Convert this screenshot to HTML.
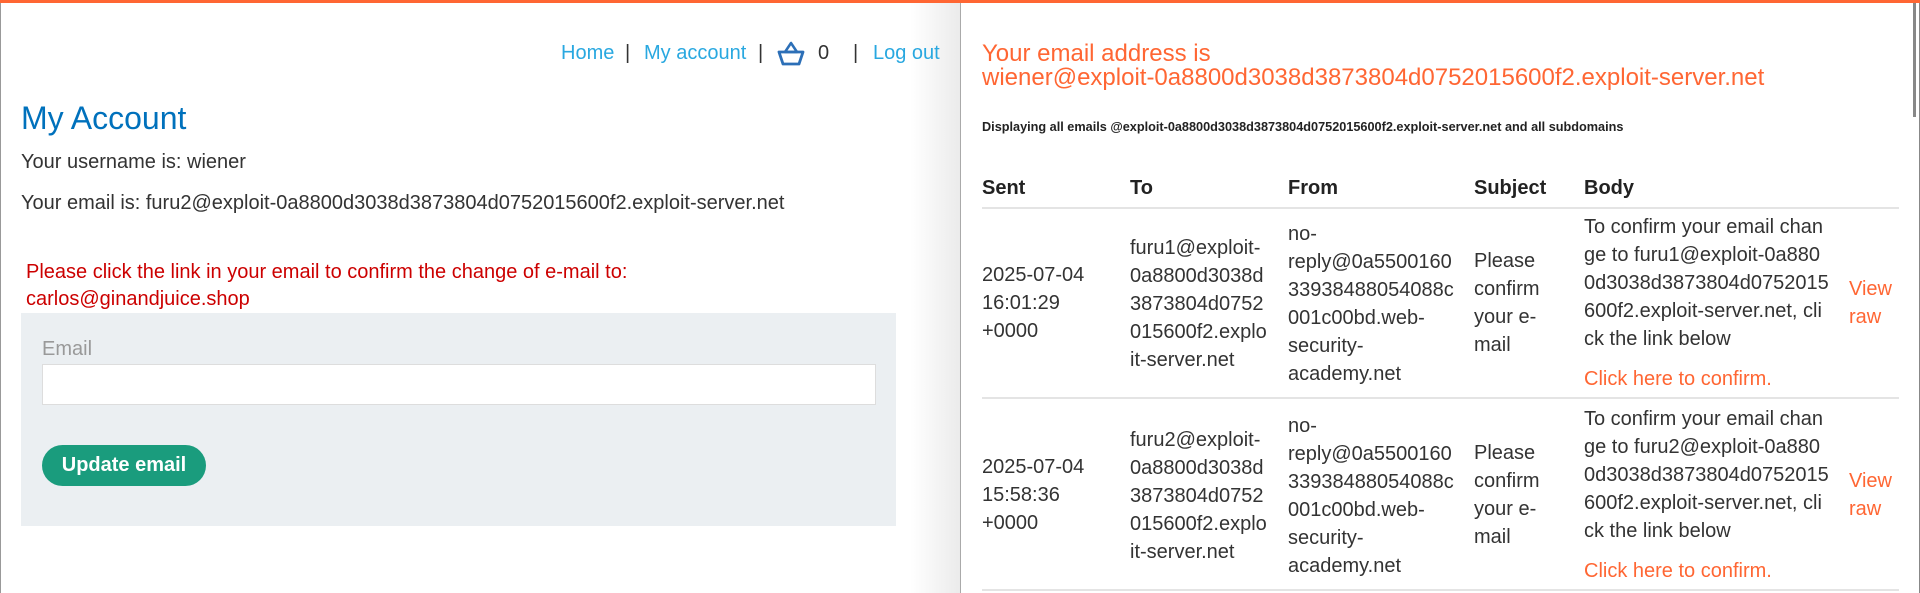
<!DOCTYPE html>
<html><head><meta charset="utf-8"><style>
*{margin:0;padding:0;box-sizing:border-box}
body{width:1920px;height:593px;overflow:hidden;background:#fff;font-family:"Liberation Sans",Arial,sans-serif;color:#333;position:relative}
.a{position:absolute;white-space:nowrap}
.t{font-size:20px;line-height:28px}
.o{color:#ff6633}
</style></head><body>
<div class="a" style="left:0;top:0;width:1920px;height:3px;background:#ff6633"></div>
<div class="a" style="left:0;top:3px;width:1px;height:590px;background:#999"></div>
<div class="a" style="left:910px;top:3px;width:50px;height:590px;background:linear-gradient(to right,rgba(0,0,0,0),rgba(0,0,0,0.08))"></div>
<div class="a" style="left:960px;top:3px;width:1px;height:590px;background:#aaa"></div>
<div class="a" style="left:1919px;top:3px;width:1px;height:590px;background:#888"></div>
<div class="a" style="left:1913px;top:3px;width:3px;height:114px;background:#888"></div>

<!-- left nav -->
<div class="a t" style="left:561px;top:39px;color:#29a8e0">Home</div>
<div class="a t" style="left:625px;top:39px;color:#333">|</div>
<div class="a t" style="left:644px;top:39px;color:#29a8e0">My account</div>
<div class="a t" style="left:758px;top:39px;color:#333">|</div>
<svg class="a" style="left:777px;top:41px" width="28" height="25" viewBox="0 0 28 25"><path d="M14 2 L8 11 H20 Z" fill="none" stroke="#2c6fb7" stroke-width="2.5" stroke-linejoin="round"/><path d="M2 11 H26 L22 23 H6 Z" fill="none" stroke="#2c6fb7" stroke-width="2.8" stroke-linejoin="round"/></svg>
<div class="a t" style="left:818px;top:39px">0</div>
<div class="a t" style="left:853px;top:39px">|</div>
<div class="a t" style="left:873px;top:39px;color:#29a8e0">Log out</div>

<div class="a" style="left:21px;top:98px;font-size:32px;line-height:40px;color:#0071bc">My Account</div>
<div class="a t" style="left:21px;top:148px">Your username is: wiener</div>
<div class="a t" style="left:21px;top:189px">Your email is: furu2@exploit-0a8800d3038d3873804d0752015600f2.exploit-server.net</div>
<div class="a t" style="left:26px;top:258px;color:#c00">Please click the link in your email to confirm the change of e-mail to:</div>
<div class="a t" style="left:26px;top:285px;color:#c00">carlos@ginandjuice.shop</div>
<div class="a" style="left:21px;top:313px;width:875px;height:213px;background:#ebeff2"></div>
<div class="a t" style="left:42px;top:335px;color:#999">Email</div>
<div class="a" style="left:42px;top:364px;width:834px;height:41px;background:#fff;border:1px solid #ddd"></div>
<div class="a" style="left:42px;top:445px;width:164px;height:41px;background:#1a9c7d;border-radius:21px;color:#fff;font-weight:bold;font-size:20px;line-height:41px;text-align:center">Update email</div>

<!-- right pane -->
<div class="a" style="left:982px;top:42px;font-size:24px;line-height:24px;color:#ff6633">Your email address is<br>wiener@exploit-0a8800d3038d3873804d0752015600f2.exploit-server.net</div>
<div class="a" style="left:982px;top:120px;font-size:12.7px;font-weight:bold;color:#222">Displaying all emails @exploit-0a8800d3038d3873804d0752015600f2.exploit-server.net and all subdomains</div>
<div class="a t" style="left:982px;top:174px;font-weight:bold;color:#222">Sent</div>
<div class="a t" style="left:1130px;top:174px;font-weight:bold;color:#222">To</div>
<div class="a t" style="left:1288px;top:174px;font-weight:bold;color:#222">From</div>
<div class="a t" style="left:1474px;top:174px;font-weight:bold;color:#222">Subject</div>
<div class="a t" style="left:1584px;top:174px;font-weight:bold;color:#222">Body</div>
<div class="a" style="left:982px;top:207px;width:917px;height:2px;background:#e4e4e4"></div>
<div class="a" style="left:982px;top:397px;width:917px;height:2px;background:#e4e4e4"></div>
<div class="a" style="left:982px;top:589px;width:917px;height:2px;background:#e4e4e4"></div>

<div class="a t" style="left:982px;top:261px">2025-07-04<br>16:01:29<br>+0000</div>
<div class="a t" style="left:1130px;top:234px">furu1@exploit-<br>0a8800d3038d<br>3873804d0752<br>015600f2.explo<br>it-server.net</div>
<div class="a t" style="left:1288px;top:220px">no-<br>reply@0a5500160<br>33938488054088c<br>001c00bd.web-<br>security-<br>academy.net</div>
<div class="a t" style="left:1474px;top:247px">Please<br>confirm<br>your e-<br>mail</div>
<div class="a t" style="left:1584px;top:213px">To confirm your email chan<br>ge to furu1@exploit-0a880<br>0d3038d3873804d0752015<br>600f2.exploit-server.net, cli<br>ck the link below</div>
<div class="a t o" style="left:1584px;top:365px">Click here to confirm.</div>
<div class="a t o" style="left:1849px;top:275px">View<br>raw</div>

<div class="a t" style="left:982px;top:453px">2025-07-04<br>15:58:36<br>+0000</div>
<div class="a t" style="left:1130px;top:426px">furu2@exploit-<br>0a8800d3038d<br>3873804d0752<br>015600f2.explo<br>it-server.net</div>
<div class="a t" style="left:1288px;top:412px">no-<br>reply@0a5500160<br>33938488054088c<br>001c00bd.web-<br>security-<br>academy.net</div>
<div class="a t" style="left:1474px;top:439px">Please<br>confirm<br>your e-<br>mail</div>
<div class="a t" style="left:1584px;top:405px">To confirm your email chan<br>ge to furu2@exploit-0a880<br>0d3038d3873804d0752015<br>600f2.exploit-server.net, cli<br>ck the link below</div>
<div class="a t o" style="left:1584px;top:557px">Click here to confirm.</div>
<div class="a t o" style="left:1849px;top:467px">View<br>raw</div>
</body></html>
